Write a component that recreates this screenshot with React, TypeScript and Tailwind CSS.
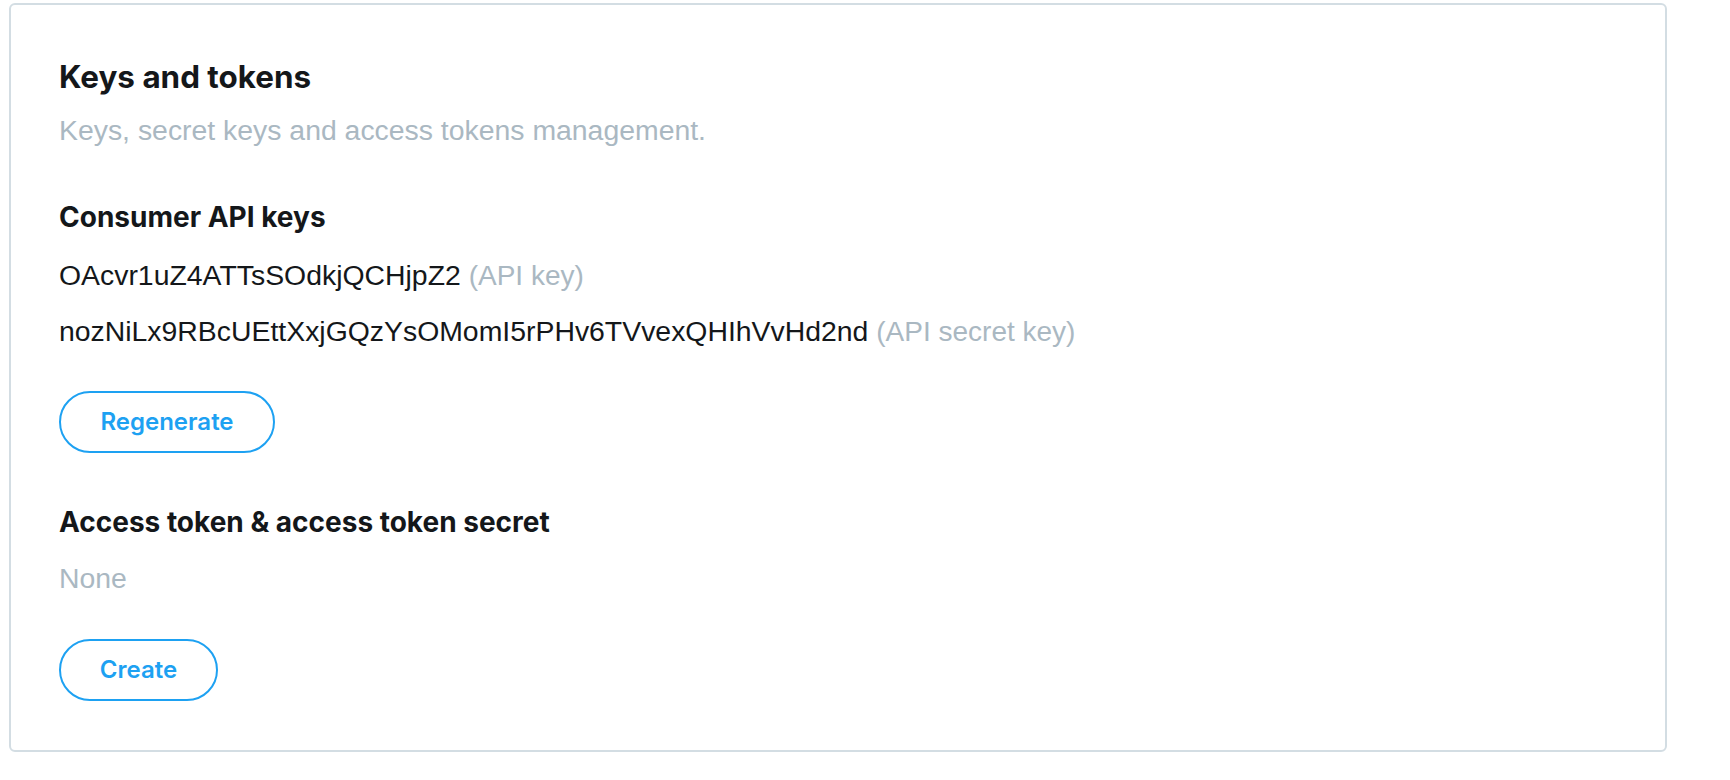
export default function App() {
  return (
    <div className="min-h-[780px] w-full bg-white" style={{ fontFamily: '"Liberation Sans", Arial, sans-serif' }}>
      <div className="ml-[9px] mt-[3px] w-[1658px] rounded-[6px] border-2 border-[#d3dde3] pl-[48px] pt-[52px] pb-[49px]">
        <h1 className="text-[31.4px] leading-[40px] font-bold text-[#14171a]" style={{ fontFamily: 'Inter, sans-serif' }}>
          Keys and tokens
        </h1>
        <p className="mt-[15px] text-[28.4px] leading-[36px] text-[#aab8c2]">
          Keys, secret keys and access tokens management.
        </p>
        <h2 className="mt-[51px] text-[28px] leading-[36px] font-bold text-[#14171a]" style={{ fontFamily: 'Inter, sans-serif' }}>
          Consumer API keys
        </h2>
        <p className="mt-[22px] h-[36px] text-[28.4px] leading-[36px] text-[#14171a]">
          OAcvr1uZ4ATTsSOdkjQCHjpZ2 <span className="text-[28px] leading-none text-[#aab8c2]">(API key)</span>
        </p>
        <p className="mt-[20px] h-[36px] text-[28.4px] leading-[36px] text-[#14171a]">
          nozNiLx9RBcUEttXxjGQzYsOMomI5rPHv6TVvexQHIhVvHd2nd <span className="text-[28px] leading-none text-[#aab8c2]">(API secret key)</span>
        </p>
        <button
          className="mt-[42px] flex h-[62px] w-[216px] items-center justify-center rounded-full border-2 border-[#1da1f2] text-[24px] font-semibold text-[#1da1f2]"
          style={{ fontFamily: 'Inter, sans-serif' }}
        >
          Regenerate
        </button>
        <h2 className="mt-[51px] text-[28px] leading-[36px] font-bold text-[#14171a]" style={{ fontFamily: 'Inter, sans-serif' }}>
          Access token &amp; access token secret
        </h2>
        <p className="mt-[20px] text-[28.4px] leading-[36px] text-[#aab8c2]">None</p>
        <button
          className="mt-[43px] flex h-[62px] w-[159px] items-center justify-center rounded-full border-2 border-[#1da1f2] text-[24px] font-semibold text-[#1da1f2]"
          style={{ fontFamily: 'Inter, sans-serif' }}
        >
          Create
        </button>
      </div>
    </div>
  );
}
